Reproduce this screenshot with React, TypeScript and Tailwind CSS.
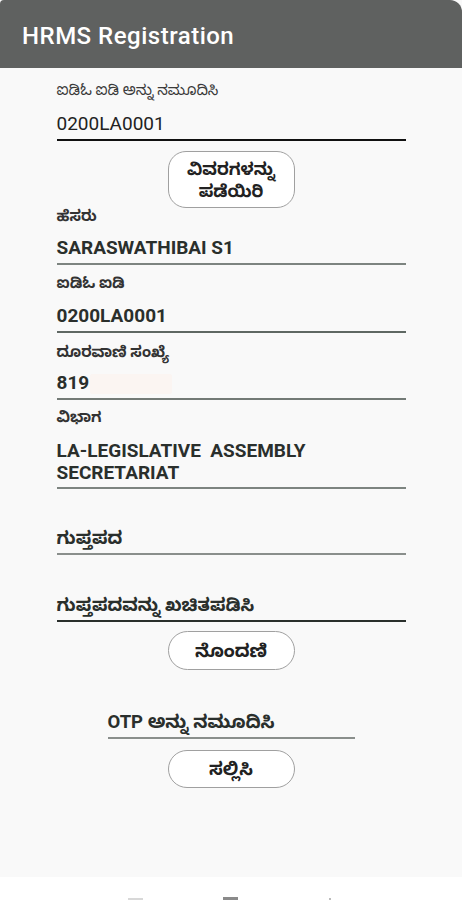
import React from "react";

const kn = { fontFamily: "Roboto, 'Noto Sans Kannada', 'Noto Sans', sans-serif" } as React.CSSProperties;

export default function App() {
  return (
    <div className="w-[462px] h-[900px] bg-white overflow-hidden" style={kn}>
      <div className="h-[877px] bg-[#f9f9f9] flex flex-col">
        <div className="h-[68px] bg-[#5f6160] rounded-tr-[12px] rounded-tl-[4px] flex items-start pl-[22px] pt-[21px]">
          <span className="text-white text-[24px] leading-[30px] font-medium tracking-[0.5px]">HRMS Registration</span>
        </div>

        <div className="w-[349px] mx-auto flex flex-col">
          <div className="mt-[12px] text-[15px] leading-[20px] text-[#3a3a3a]">ಐಡಿಓ ಐಡಿ ಅನ್ನು ನಮೂದಿಸಿ</div>
          <div className="mt-[12px] h-[29px] border-b-2 border-[#111] text-[19px] leading-[24px] text-[#222]">0200LA0001</div>

          <button className="mt-[10px] self-center w-[127px] h-[57px] rounded-[18px] border border-[#a0a0a0] bg-white text-[17px] leading-[22px] font-bold text-[#222] flex flex-col items-center justify-center">
            <span>ವಿವರಗಳನ್ನು</span>
            <span>ಪಡೆಯಿರಿ</span>
          </button>

          <div className="text-[15px] leading-[16px] font-bold text-[#333]">ಹೆಸರು</div>
          <div className="mt-[12px] h-[29px] border-b-2 border-[#7d8480] text-[19px] leading-[24px] font-bold text-[#2a2f2c]">SARASWATHIBAI S1</div>

          <div className="mt-[10px] text-[15px] leading-[16px] font-bold text-[#333]">ಐಡಿಓ ಐಡಿ</div>
          <div className="mt-[13px] h-[29px] border-b-2 border-[#5f6863] text-[19px] leading-[24px] font-bold text-[#2a2f2c]">0200LA0001</div>

          <div className="mt-[11px] text-[15px] leading-[16px] font-bold text-[#333]">ದೂರವಾಣಿ ಸಂಖ್ಯೆ</div>
          <div className="mt-[11px] h-[29px] border-b-2 border-[#737a76] text-[19px] leading-[24px] font-bold text-[#2a2f2c] flex items-start">
            <span>819</span>
            <span className="ml-[1px] mt-[3px] inline-block w-[82px] h-[20px] bg-[#fbf5f2] rounded-[2px]"></span>
          </div>

          <div className="mt-[9px] text-[15px] leading-[16px] font-bold text-[#333]">ವಿಭಾಗ</div>
          <div className="mt-[15px] pb-[3px] border-b-2 border-[#7d8480] text-[19px] leading-[22px] font-bold text-[#2a2f2c] whitespace-pre">{"LA-LEGISLATIVE  ASSEMBLY\nSECRETARIAT"}</div>

          <div className="mt-[37px] h-[29px] border-b-2 border-[#8a8f8c] text-[18px] leading-[24px] font-bold text-[#2a2f2c]">ಗುಪ್ತಪದ</div>

          <div className="mt-[38px] h-[29px] border-b-2 border-[#2a2f2c] text-[18px] leading-[24px] font-bold text-[#2a2f2c]">ಗುಪ್ತಪದವನ್ನು ಖಚಿತಪಡಿಸಿ</div>

          <button className="mt-[9px] self-center w-[127px] h-[39px] rounded-[20px] border border-[#a0a0a0] bg-white text-[18px] leading-[22px] font-bold text-[#222]">ನೊಂದಣಿ</button>

          <div className="mt-[40px] self-center w-[247px] h-[29px] border-b-2 border-[#8a8f8c] text-[18.5px] leading-[24px] font-bold text-[#2a2f2c]">OTP ಅನ್ನು ನಮೂದಿಸಿ</div>

          <button className="mt-[11px] self-center w-[127px] h-[38px] rounded-[20px] border border-[#a0a0a0] bg-white text-[18px] leading-[22px] font-bold text-[#222]">ಸಲ್ಲಿಸಿ</button>
        </div>
      </div>
      <div className="h-[23px] bg-white relative">
        <div className="absolute left-[128px] top-[21px] w-[15px] h-[2px] bg-[#d8d8d8]"></div>
        <div className="absolute left-[223px] top-[20px] w-[15px] h-[3px] bg-[#8a8a8a]"></div>
        <div className="absolute left-[329px] top-[21px] w-[2px] h-[2px] bg-[#bbbbbb]"></div>
      </div>
    </div>
  );
}
